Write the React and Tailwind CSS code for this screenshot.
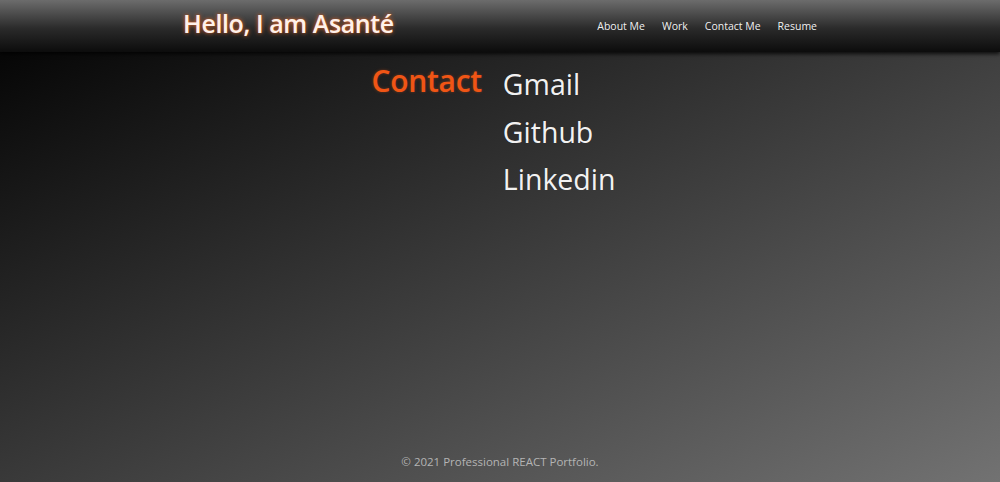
const NAV = ["About Me", "Work", "Contact Me", "Resume"];
const LINKS = ["Gmail", "Github", "Linkedin"];

export default function App() {
  return (
    <div
      className="min-h-screen flex flex-col bg-[linear-gradient(to_bottom_right,#000000,#727272)] text-white"
      style={{ fontFamily: '"Open Sans", "Noto Sans", sans-serif' }}
    >
      {/* Header */}
      <header className="h-[52px] bg-[linear-gradient(to_bottom,#6c6c6c,#2a2a2a_55%,#0c0c0c)] shadow-[0_2px_4px_rgba(0,0,0,0.8)]">
        <div className="w-[640px] mx-auto h-full flex items-center justify-between pb-[4px]">
          <h1 className="text-[25px] font-semibold tracking-[-0.4px] pl-[3px] text-[#fdf1ea] [text-shadow:0_0_4px_#e0672b,0_0_1px_#c24a12]">
            Hello, I am Asanté
          </h1>
          <nav className="flex gap-[17px] text-[10.5px] text-white/95 pr-[3px] pt-[5px]">
            {NAV.map((item) => (
              <a key={item} href="#" className="hover:underline">
                {item}
              </a>
            ))}
          </nav>
        </div>
      </header>

      {/* Contact */}
      <main className="flex-1 flex justify-center pt-[9px]">
        <div className="flex gap-[21px] mr-[13px]">
          <h2 className="text-[30px] font-semibold text-[#f05515] leading-[40px] tracking-[-0.3px] [text-shadow:0_0_3px_rgba(240,85,21,0.4)]">
            Contact
          </h2>
          <ul className="flex flex-col">
            {LINKS.map((link) => (
              <li key={link}>
                <a href="#" className="text-[28.5px] leading-[47.5px] text-white/95">
                  {link}
                </a>
              </li>
            ))}
          </ul>
        </div>
      </main>

      {/* Footer */}
      <footer className="text-center text-[11.5px] text-[#b4b4b4] pb-[12px]">
        © 2021 Professional REACT Portfolio.
      </footer>
    </div>
  );
}
